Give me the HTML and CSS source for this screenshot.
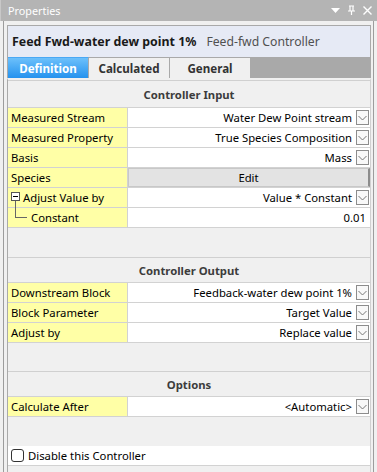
FILE: index.html
```html
<!DOCTYPE html>
<html>
<head>
<meta charset="utf-8">
<link rel="stylesheet" href="styles.css">
</head>
<body>
<div class="titlebar">
  <span class="tb-title">Properties</span>
  <div class="tb-icons">
    <svg width="11" height="11" viewBox="0 0 11 11"><path d="M1 3 L10 3 L5.5 8 Z" fill="#fff"/></svg>
    <svg width="11" height="11" viewBox="0 0 11 11"><path d="M3 1 H8 M4 1 V6 M7 1 V6 M2 6 H9 M5.5 6 V10" stroke="#fff" stroke-width="1.2" fill="none"/></svg>
    <svg width="11" height="11" viewBox="0 0 11 11"><path d="M1.5 1.5 L9.5 9.5 M9.5 1.5 L1.5 9.5" stroke="#fff" stroke-width="1.4"/></svg>
  </div>
</div>
<div class="frame">
  <div class="header">
    <span class="obj-name">Feed Fwd-water dew point 1%</span>
    <span class="obj-type">Feed-fwd Controller</span>
  </div>
  <div class="tabs">
    <div class="tab active">Definition</div>
    <div class="tab">Calculated</div>
    <div class="tab">General</div>
    <div class="tab-fill"></div>
  </div>
  <div class="content">
    <div class="section-title first">Controller Input</div>
    <div class="row"><div class="label">Measured Stream</div><div class="value"><span>Water Dew Point stream</span><span class="dd"><svg width="9" height="6" viewBox="0 0 9 6"><path d="M0.5 1 L4.5 5 L8.5 1" stroke="#777" fill="none"/></svg></span></div></div>
    <div class="row"><div class="label">Measured Property</div><div class="value"><span>True Species Composition</span><span class="dd"><svg width="9" height="6" viewBox="0 0 9 6"><path d="M0.5 1 L4.5 5 L8.5 1" stroke="#777" fill="none"/></svg></span></div></div>
    <div class="row"><div class="label">Basis</div><div class="value"><span>Mass</span><span class="dd"><svg width="9" height="6" viewBox="0 0 9 6"><path d="M0.5 1 L4.5 5 L8.5 1" stroke="#777" fill="none"/></svg></span></div></div>
    <div class="row"><div class="label">Species</div><div class="value btn-cell"><div class="edit-btn">Edit</div></div></div>
    <div class="row"><div class="label tree-parent"><span class="minus-box"></span>Adjust Value by</div><div class="value"><span>Value * Constant</span><span class="dd"><svg width="9" height="6" viewBox="0 0 9 6"><path d="M0.5 1 L4.5 5 L8.5 1" stroke="#777" fill="none"/></svg></span></div></div>
    <div class="row"><div class="label tree-child"><span class="connector"></span>Constant</div><div class="value plain">0.01</div></div>
    <div class="spacer"></div>

    <div class="section-title">Controller Output</div>
    <div class="row"><div class="label">Downstream Block</div><div class="value"><span>Feedback-water dew point 1%</span><span class="dd"><svg width="9" height="6" viewBox="0 0 9 6"><path d="M0.5 1 L4.5 5 L8.5 1" stroke="#777" fill="none"/></svg></span></div></div>
    <div class="row"><div class="label">Block Parameter</div><div class="value"><span>Target Value</span><span class="dd"><svg width="9" height="6" viewBox="0 0 9 6"><path d="M0.5 1 L4.5 5 L8.5 1" stroke="#777" fill="none"/></svg></span></div></div>
    <div class="row"><div class="label">Adjust by</div><div class="value"><span>Replace value</span><span class="dd"><svg width="9" height="6" viewBox="0 0 9 6"><path d="M0.5 1 L4.5 5 L8.5 1" stroke="#777" fill="none"/></svg></span></div></div>
    <div class="spacer short"></div>

    <div class="section-title">Options</div>
    <div class="row"><div class="label">Calculate After</div><div class="value"><span>&lt;Automatic&gt;</span><span class="dd"><svg width="9" height="6" viewBox="0 0 9 6"><path d="M0.5 1 L4.5 5 L8.5 1" stroke="#777" fill="none"/></svg></span></div></div>
    <div class="spacer"></div>

    <div class="check-row"><span class="checkbox"></span>Disable this Controller</div>
  </div>
</div>
</body>
</html>
```

FILE: styles.css
```css
html, body {
  margin: 0;
  padding: 0;
}
body {
  width: 377px;
  height: 472px;
  background: #f0f0f0;
  font-family: "Noto Sans", "Open Sans", sans-serif;
  font-size: 11.3px;
  color: #000;
  overflow: hidden;
}
.titlebar {
  height: 21px;
  background: #b4b4b4;
  display: flex;
  align-items: center;
  justify-content: space-between;
  padding: 0 4px 0 7px;
  border-left: 1px solid #c8c8c8;
}
.tb-title {
  color: #fff;
  font-size: 10.8px;
}
.tb-icons {
  display: flex;
  gap: 5px;
  align-items: center;
}
.frame {
  margin: 0 3px;
  border-left: 1px solid #9c9c9c;
  border-right: 1px solid #9c9c9c;
  padding: 4px 2px 0 3px;
  height: 451px;
  box-sizing: border-box;
}
.header {
  height: 32px;
  box-sizing: border-box;
  background: #e6eaf5;
  border: 1px solid #a9a9a9;
  border-bottom: none;
  display: flex;
  align-items: center;
  padding-left: 4px;
  gap: 10px;
}
.obj-name {
  font-weight: bold;
  font-size: 12.4px;
  color: #1a1a1a;
}
.obj-type {
  font-size: 12.2px;
  color: #505050;
}
.tabs {
  display: flex;
  height: 21px;
  background: #a9a9a9;
  border-left: 1px solid #a9a9a9;
}
.tab {
  width: 80px;
  display: flex;
  align-items: center;
  justify-content: center;
  font-weight: bold;
  font-size: 11.6px;
  color: #333;
  background: #f0f0f0;
  border-right: 1px solid #a9a9a9;
  border-top: 1px solid #a9a9a9;
}
.tab.active {
  background: linear-gradient(#6cc0fb, #2592ee);
  color: #fff;
  border-top-color: #4aa8f4;
}
.tab-fill {
  flex: 1;
}
.content {
  border-top: 2px solid #f0f0f0;
  border-left: 1px solid #a9a9a9;
  border-right: 1px solid #d0d0d0;
  box-shadow: inset 0 1px 0 #c8c8c8;
  height: 392px;
  background: #f0f0f0;
}
.section-title {
  height: 24px;
  border-top: 1px solid #d0d0d0;
  display: flex;
  align-items: center;
  justify-content: center;
  font-weight: bold;
  color: #3c3c3c;
}
.section-title.first {
  height: 26px;
}
.row {
  display: grid;
  grid-template-columns: 120px 1fr;
  height: 20px;
  box-sizing: border-box;
  border-top: 1px solid #d2d2d2;
}
.row + .spacer, .row + .check-row {
  border-top: 1px solid #d2d2d2;
}
.label {
  background: #ffffa6;
  border-right: 1px solid #d2d2d2;
  display: flex;
  align-items: center;
  padding-left: 3px;
  white-space: nowrap;
}
.value {
  background: #fff;
  display: flex;
  align-items: center;
  justify-content: flex-end;
  gap: 4px;
  padding-right: 1px;
  white-space: nowrap;
}
.value.plain {
  padding-right: 4px;
}
.dd {
  width: 13px;
  height: 15px;
  box-sizing: border-box;
  border: 1px solid #8c8c8c;
  background: #f8f8f8;
  display: flex;
  align-items: center;
  justify-content: center;
}
.btn-cell {
  padding: 0;
  align-items: stretch;
}
.edit-btn {
  flex: 1;
  background: #e3e3e3;
  border: 1px solid #c8c8c8;
  border-right: 2px solid #8c8c8c;
  display: flex;
  align-items: center;
  justify-content: center;
}
.tree-parent {
  position: relative;
  padding-left: 15px;
}
.minus-box {
  position: absolute;
  left: 3px;
  top: 4px;
  width: 9px;
  height: 9px;
  box-sizing: border-box;
  border: 1px solid #555;
  background: #fff;
}
.minus-box::after {
  content: "";
  position: absolute;
  left: 1px;
  top: 3px;
  width: 5px;
  height: 1px;
  background: #000;
}
.tree-child {
  position: relative;
  padding-left: 23px;
}
.connector {
  position: absolute;
  left: 7px;
  top: -7px;
  width: 11px;
  height: 16px;
  border-left: 1px solid #666;
  border-bottom: 1px solid #666;
}
.spacer {
  height: 29px;
}
.spacer.short {
  height: 28px;
}
.check-row {
  height: 19px;
  background: #fff;
  display: flex;
  align-items: center;
  gap: 4px;
  padding-left: 3px;
  border-bottom: 1px solid #d2d2d2;
}
.checkbox {
  width: 13px;
  height: 13px;
  box-sizing: border-box;
  border: 1px solid #333;
  border-radius: 3px;
  background: #fff;
}
```
